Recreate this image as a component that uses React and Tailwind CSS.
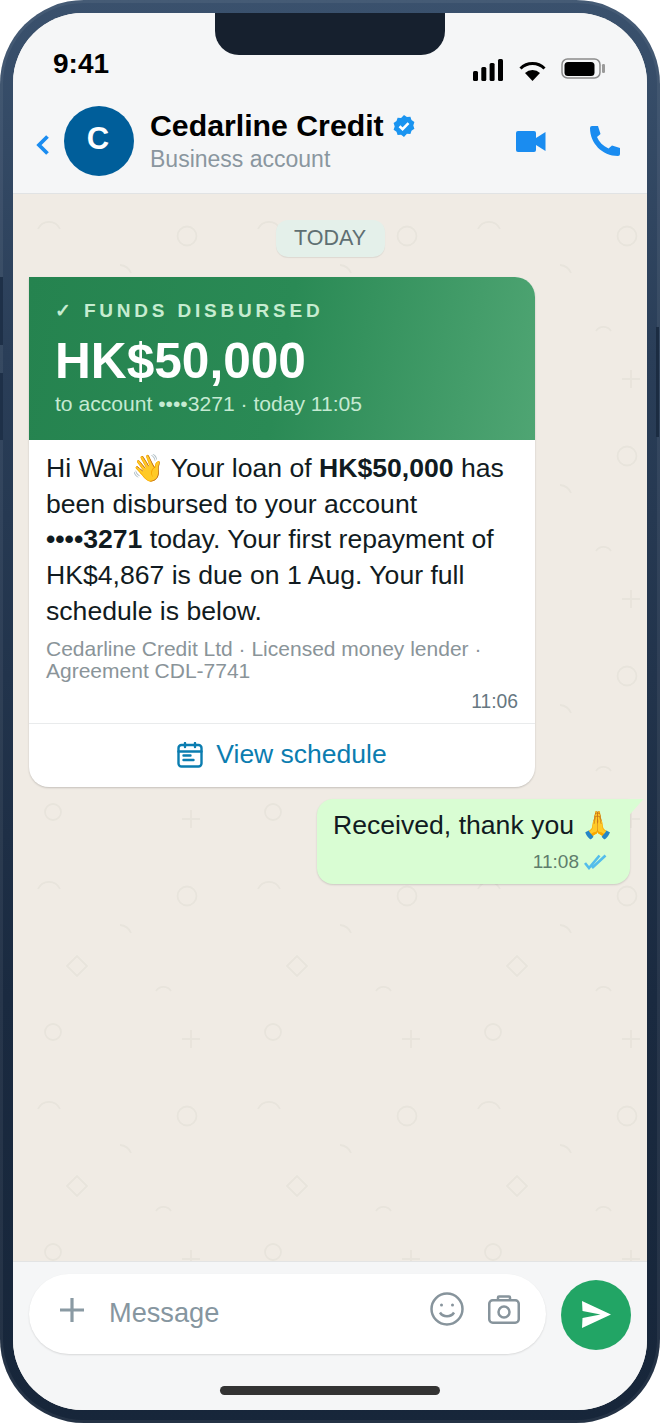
const SANS = "font-['Liberation_Sans',Arial,sans-serif]";

// Repeating doodle wallpaper behind the chat
function Wallpaper() {
  return (
    <svg className="absolute inset-0 h-full w-full" aria-hidden="true">
      <defs>
        <pattern id="doodles" x="0" y="0" width="220" height="220" patternUnits="userSpaceOnUse">
          <g fill="none" stroke="#e8e4dc" strokeWidth="1.800">
            <path d="M25 35a12 12 0 0 1 22 0" />
            <circle cx="174" cy="42" r="9.500" />
            <path d="M107 71a13 13 0 0 1 11 8" />
            <path d="M54 112l10 -10l10 10l-10 10z" />
            <path d="M143 137a9 9 0 0 1 15 0" />
            <circle cx="40" cy="178" r="8" />
            <path d="M178 176v18M169 185h18" />
          </g>
        </pattern>
      </defs>
      <rect width="100%" height="100%" fill="url(#doodles)" />
    </svg>
  );
}

function Verified() {
  return (
    <svg width="24" height="24" viewBox="0 0 24 24">
      <path fill="#1a94f0" d="M12 1l2.900 2 3.500-.3 1.100 3.300 2.900 2-1.100 3.400 1.100 3.400-2.900 2-1.100 3.300-3.500-.3L12 23l-2.900-2.200-3.500.3-1.100-3.300-2.900-2L2.700 12.400 1.600 9l2.900-2 1.100-3.300 3.500.3z" />
      <path d="M7.500 12.200l3.100 3 5.900-6" fill="none" stroke="#fff" strokeWidth="2.600" />
    </svg>
  );
}

function Header() {
  return (
    <div className="relative z-10 shrink-0 border-b border-[#e1e3e4] bg-[#f5f6f7]">
      <div className="flex h-[93px] items-start justify-between pl-10 pr-[42px] pt-[35px]">
        <span className="text-[28px] leading-8 font-bold text-black">9:41</span>
        <div className="flex items-start pt-[10px]">
          <svg className="mt-px" width="30" height="22" viewBox="0 0 30 22" fill="#000">
            <rect x="0" y="12" width="5" height="10" rx="1.500" />
            <rect x="8.300" y="8" width="5" height="14" rx="1.500" />
            <rect x="16.600" y="4" width="5" height="18" rx="1.500" />
            <rect x="25" y="0" width="5" height="22" rx="1.500" />
          </svg>
          <svg className="ml-4 mt-1" width="27" height="19" viewBox="0 0 27 19">
            <path d="M1.500 6.500a17 17 0 0 1 24 0" fill="none" stroke="#000" strokeWidth="3" />
            <path d="M6 11a11 11 0 0 1 15 0L13.500 19z" fill="#000" />
          </svg>
          <svg className="ml-[15px]" width="44" height="21" viewBox="0 0 44 21">
            <rect x="1" y="1" width="38" height="19" rx="5.500" fill="none" stroke="#8c8c8c" strokeWidth="1.500" />
            <rect x="3.500" y="4" width="30" height="14" rx="3.500" fill="#000" />
            <rect x="41" y="6" width="3" height="9" rx="1.200" fill="#9a9a9a" />
          </svg>
        </div>
      </div>
      <div className="flex h-[87px] items-start pl-[23px] pr-[27px]">
        <svg className="mt-7" width="14" height="22" viewBox="0 0 14 22">
          <path d="M11.500 2.500L3 11l8.500 8.500" fill="none" stroke="#1a8cf0" strokeWidth="3.800" />
        </svg>
        <div className="ml-[14px] flex h-[70px] w-[70px] items-center justify-center rounded-full bg-[#005e9a] pb-1 pr-[2px] text-[31px] font-bold text-white">
          C
        </div>
        <div className="ml-4 mt-[2px] flex-1">
          <div className="flex items-center gap-2">
            <span className="text-[30.250px] leading-9 font-bold text-black">Cedarline Credit</span>
            <Verified />
          </div>
          <div className="mt-px text-[23px] leading-7 text-[#8a969f]">Business account</div>
        </div>
        <div className="mt-[20px] flex items-start">
          <svg className="mt-[5px]" width="30" height="21" viewBox="0 0 30 21" fill="#1a8cf0">
            <rect x="0" y="0" width="20" height="21" rx="2" />
            <path d="M20 7l9.500-6v19L20 14z" />
          </svg>
          <svg className="ml-[44px]" width="30" height="30" viewBox="0 0 30 30">
            <path fill="#1a8cf0" d="M2 0H8L10.500 8L7 11C9 16 13 20 18.500 22.500L22 19.500L30 22V28Q30 30 28 30C12 30 0 17 0 2Q0 0 2 0Z" />
          </svg>
        </div>
      </div>
    </div>
  );
}

function LoanCard() {
  return (
    <div className="w-[506px] overflow-hidden rounded-[20px] rounded-tl-none bg-white shadow-[0_1px_2px_rgba(0,0,0,0.18)]">
      <div className="h-[163px] bg-[linear-gradient(100deg,#25834f_0%,#2a8a55_50%,#4fa573_100%)] pl-[26px] pt-6 text-white">
        <div className="text-[19px] leading-5 font-bold tracking-[3.800px] text-[#c6ecd0]">✓ FUNDS DISBURSED</div>
        <div className="mt-[10px] text-[49.600px] leading-[60px] font-bold">HK$50,000</div>
        <div className="mt-px text-[21.100px] leading-6 text-[#c5ead2]">to account ••••3271 · today 11:05</div>
      </div>
      <div className="px-[17px] pt-[11px]">
        <p className="text-[26.600px] leading-[35.700px] text-[#111b21]">
          Hi Wai 👋 Your loan of <b>HK$50,000</b> has been disbursed to your account <b>••••3271</b> today. Your first repayment of HK$4,867 is due on 1 Aug. Your full schedule is below.
        </p>
        <p className="mt-2 text-[21px] leading-[22px] text-[#8a9499]">
          Cedarline Credit Ltd · Licensed money lender · Agreement CDL-7741
        </p>
        <div className="mt-2 text-right text-[19.300px] leading-6 text-[#667781]">11:06</div>
      </div>
      <div className="mt-[9px] flex h-[64px] items-center justify-center gap-[13px] border-t border-[#e9ebec] text-[26.500px] text-[#0b7db0]">
        <svg width="26" height="26" viewBox="0 0 26 26" fill="none" stroke="#0b7db0" strokeWidth="2.400" strokeLinecap="round">
          <rect x="1.500" y="3" width="23" height="21.500" rx="3" />
          <path d="M1.500 9.500h23M8 1v4M18 1v4" />
          <path d="M6.500 13.500h7M6.500 18h10" />
        </svg>
        <span>View schedule</span>
      </div>
    </div>
  );
}

function SentBubble() {
  return (
    <div className="relative ml-auto mr-px mt-3 h-[85px] w-[313px] rounded-[16px] rounded-tr-none bg-[#d9fdd3] pl-4 pt-2 shadow-[0_1px_2px_rgba(0,0,0,0.15)]">
      <span className="absolute -right-[14px] top-0 h-[17px] w-[15px] bg-[#d9fdd3] [clip-path:polygon(0_0,100%_0,0_100%)]" />
      <div className="text-[26.600px] leading-9 text-[#111b21]">Received, thank you 🙏</div>
      <div className="mt-[7px] flex items-center justify-end gap-[5px] pr-[23px] text-[19px] leading-6 text-[#5f7d6c]">
        <span>11:08</span>
        <svg width="23" height="16" viewBox="0 0 23 16" fill="none" stroke="#53bdeb" strokeWidth="2.600">
          <path d="M1 9l4 5L15.500 1.500M8 14L21.500 1.500" />
        </svg>
      </div>
    </div>
  );
}

function Composer() {
  return (
    <div className="relative z-10 h-[149px] shrink-0 border-t border-[#e3e4e4] bg-[#f5f6f7]">
      <div className="flex items-start pl-4 pr-4 pt-3">
        <div className="flex h-[80px] flex-1 items-center rounded-full bg-white pl-[31px] pr-[26px] shadow-[0_1px_2px_rgba(0,0,0,0.12)]">
          <svg className="-mt-2" width="24" height="24" viewBox="0 0 24 24" stroke="#8a9aa3" strokeWidth="3.200">
            <path d="M12 0v24M0 12h24" />
          </svg>
          <span className="-mt-[2px] ml-[25px] flex-1 text-[27.200px] text-[#8696a0]">Message</span>
          <svg className="-mt-[10px]" width="34" height="34" viewBox="0 0 34 34" fill="none" stroke="#87949c" strokeWidth="2.500">
            <circle cx="17" cy="17" r="15.500" />
            <path d="M10 20.500c3 5 11 5 14 0" />
            <circle cx="11.500" cy="13" r="1.500" fill="#87949c" stroke="none" />
            <circle cx="22.500" cy="13" r="1.500" fill="#87949c" stroke="none" />
          </svg>
          <svg className="-mt-[10px] ml-[24px]" width="32" height="29" viewBox="0 0 32 29" fill="none" stroke="#87949c" strokeWidth="2.500">
            <rect x="1.250" y="5.250" width="29.500" height="22.500" rx="3.500" />
            <path d="M10 5V2.500q0-1 1-1h10q1 0 1 1V5" />
            <circle cx="16" cy="17" r="5.500" />
          </svg>
        </div>
        <div className="ml-[15px] mt-[6px] flex h-[70px] w-[70px] items-center justify-center rounded-full bg-[#22a565] pb-[2px]">
          <svg width="29" height="27" viewBox="0 0 29 27" fill="#fff">
            <path d="M0 0L29 13.500 0 27l.5-10L18.500 13.500 .5 10z" />
          </svg>
        </div>
      </div>
      <div className="absolute bottom-[15px] left-[207px] h-[9px] w-[220px] rounded-full bg-[#333]" />
    </div>
  );
}

export default function App() {
  return (
    <div className={`${SANS} relative h-[1423px] w-[660px] overflow-hidden bg-white`}>
      <div className="h-full w-full rounded-[84px] bg-[linear-gradient(180deg,#3a516d_0%,#2a3e58_25%,#1a2a40_70%,#17263a_100%)] p-[13px] shadow-[inset_0_0_0_3px_rgba(255,255,255,0.06)]">
        <div className="relative flex h-full flex-col overflow-hidden rounded-[70px] bg-[#f0ebe4]">
          <div className="absolute left-[202px] top-0 z-20 h-[42px] w-[230px] rounded-b-[24px] bg-[#16202e]" />
          <Header />
          <div className="relative flex-1">
            <Wallpaper />
            <div className="relative px-4 pt-[26px]">
              <div className="mx-auto flex h-[37px] w-[109px] items-center justify-center rounded-xl bg-[#e4f0ea] text-[21.500px] text-[#5f6f72] shadow-[0_1px_1px_rgba(0,0,0,0.08)]">
                TODAY
              </div>
              <div className="mt-5">
                <LoanCard />
              </div>
              <SentBubble />
            </div>
          </div>
          <Composer />
        </div>
      </div>
      {/* side buttons on the frame */}
      <span className="absolute left-0 top-[277px] h-[68px] w-[3px] bg-[#1e3048]" />
      <span className="absolute left-0 top-[373px] h-[67px] w-[3px] bg-[#1e3048]" />
      <span className="absolute right-px top-[327px] h-[110px] w-[3px] bg-[#1b2c42]" />
    </div>
  );
}
